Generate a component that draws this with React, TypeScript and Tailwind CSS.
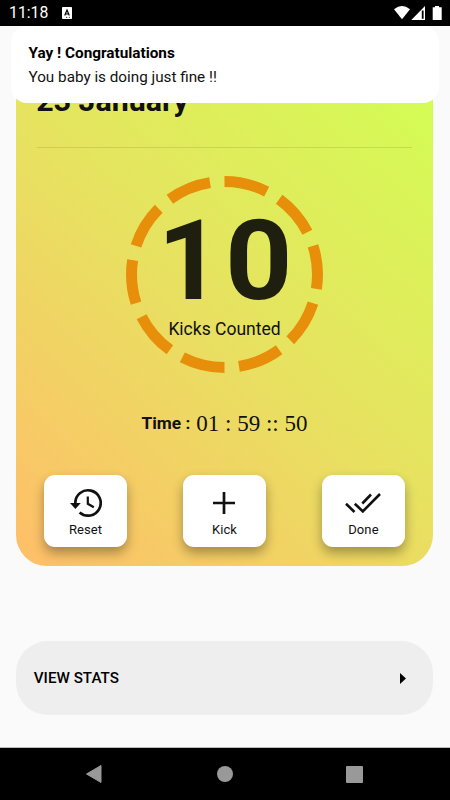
import React from "react";

function Action({ label, children }: { label: string; children: React.ReactNode }) {
  return (
    <button className="flex h-[72px] w-[83.500px] flex-col items-center rounded-[11px] bg-white pt-[10px] text-[#111] shadow-[0_6px_12px_rgba(0,0,0,0.33)]">
      <span className="flex h-[36px] items-center justify-center">{children}</span>
      <span className="mt-px text-[13px] leading-[15px] tracking-[0.1px]">{label}</span>
    </button>
  );
}

export default function App() {
  return (
    <div className="relative flex h-[800px] w-[450px] flex-col overflow-hidden bg-[#fafafa] font-['Roboto',sans-serif] text-black">
      <header className="flex h-[26px] shrink-0 items-center bg-black pl-[9px] pr-[6px] text-white">
        <span className="w-[39px] text-[15.800px] leading-[28px]">11:18</span>
        <svg className="ml-[14px]" width="10" height="12" viewBox="0 0 10 12">
          <rect width="10" height="12" rx="0.800" fill="#fff" />
          <path d="M2.700 8.500 5 3l2.300 5.500M3.500 7h3" fill="none" stroke="#000" strokeWidth="1.200" />
          <path d="M4 10.400h1.200M6.800 10.400h1" stroke="#000" strokeWidth="0.800" />
        </svg>
        <svg className="ml-auto" width="50" height="16" viewBox="0 0 50 16">
          <path d="M0 4.300Q8-2.300 16 4.300L8 14.300z" fill="#fff" />
          <path d="M17.300 15 31 1v14z" fill="#fff" />
          <path d="M27.800 5.500h1.800v8.300h-1.800z" fill="#000" />
          <path d="M41 1h4v1.300h2.700v12.700h-9V2.300H41z" fill="#fff" />
        </svg>
      </header>

      <main className="flex flex-1 flex-col items-center pr-px">
        <section className="mt-[34px] flex h-[506px] w-[417.400px] flex-col rounded-[31px] bg-[linear-gradient(42deg,#ffbe69_0%,#e7e260_50%,#d3fd54_97%)]">
          <h1 className="ml-[20.500px] mt-[22px] text-[30.300px] font-bold leading-[38px] text-[#111]">23 January</h1>
          <div className="mx-[21px] mt-[27px] h-px bg-black/10" />
          <div className="relative mx-auto mt-[27.500px] h-[197px] w-[197px]">
            <svg className="absolute inset-0" width="197" height="197" viewBox="0 0 197 197">
              <circle cx="98.500" cy="98.500" r="93" fill="none" stroke="#e78e0b" strokeWidth="11" pathLength="360" strokeDasharray="27 9" transform="rotate(-90 98.500 98.500)" />
            </svg>
            <div className="relative flex flex-col items-center pt-[30px] text-[#1f1f10]">
              <div className="flex h-[110px] items-center justify-center gap-[6px] text-[111px] font-bold leading-[110px]">
                <span className="block">1</span>
                <span className="block scale-x-106">0</span>
              </div>
              <span className="mt-px text-[17.500px] leading-[25px] text-[#111]">Kicks Counted</span>
            </div>
          </div>
          <div className="mt-[36.500px] flex h-[30px] items-center justify-center text-[#111]">
            <span className="text-[17.300px] font-bold">Time :</span>
            <span className="ml-[6px] font-['Liberation_Serif',serif] text-[23px]">01 : 59 :: 50</span>
          </div>
          <div className="mx-[28px] mt-[36px] flex justify-between">
            <Action label="Reset">
              <svg width="32" height="30" viewBox="0 0 32 30" fill="none" stroke="#111" strokeWidth="2.700">
                <path d="M5.300 16V15A12.700 12.700 0 1 1 9.600 24.500" />
                <path d="M0 15h10.800l-5.400 6z" fill="#111" stroke="none" />
                <path d="M17.800 8.500v7.300l6 3.400" strokeWidth="2.200" />
              </svg>
            </Action>
            <Action label="Kick">
              <svg width="22" height="22" viewBox="0 0 22 22"><path d="M11 0v22M0 11h22" stroke="#111" strokeWidth="2.700" /></svg>
            </Action>
            <Action label="Done">
              <svg width="36" height="20" viewBox="0 0 36 20" fill="none" stroke="#111" strokeWidth="2.600">
                <path d="M1 10.700 9.500 19M9.800 10.700l8 7.700L35 1M17.300 10.500 26 1.500" />
              </svg>
            </Action>
          </div>
        </section>
        <button className="mt-[75px] flex h-[74px] w-[417.400px] items-center justify-between rounded-[32px] bg-[#eee] pl-[18px] pr-[27px]">
          <span className="text-[15.200px] font-medium">VIEW STATS</span>
          <svg width="6" height="11" viewBox="0 0 6 11"><path d="M0 0v11l6-5.500z" /></svg>
        </button>
      </main>

      <nav className="flex h-[53px] shrink-0 items-center border-t border-[#bbb] bg-black pl-[86px] text-[#999]">
        <svg width="16" height="18" viewBox="0 0 16 18"><path d="M15 .5v17L.5 9z" fill="currentColor" stroke="currentColor" strokeLinejoin="round" /></svg>
        <span className="ml-[115px] h-4 w-4 rounded-full bg-[#999]" />
        <span className="ml-[113px] h-[17px] w-[17px] rounded-[1px] bg-[#999]" />
      </nav>

      <div className="absolute left-[11px] top-[26px] flex h-[77px] w-[428px] flex-col rounded-[16px] bg-white pl-[17.500px] pt-[15px]">
        <p className="text-[15.300px] font-bold leading-[24px]">Yay ! Congratulations</p>
        <p className="text-[15.250px] leading-[24px] text-[#111]">You baby is doing just fine !!</p>
      </div>
    </div>
  );
}
